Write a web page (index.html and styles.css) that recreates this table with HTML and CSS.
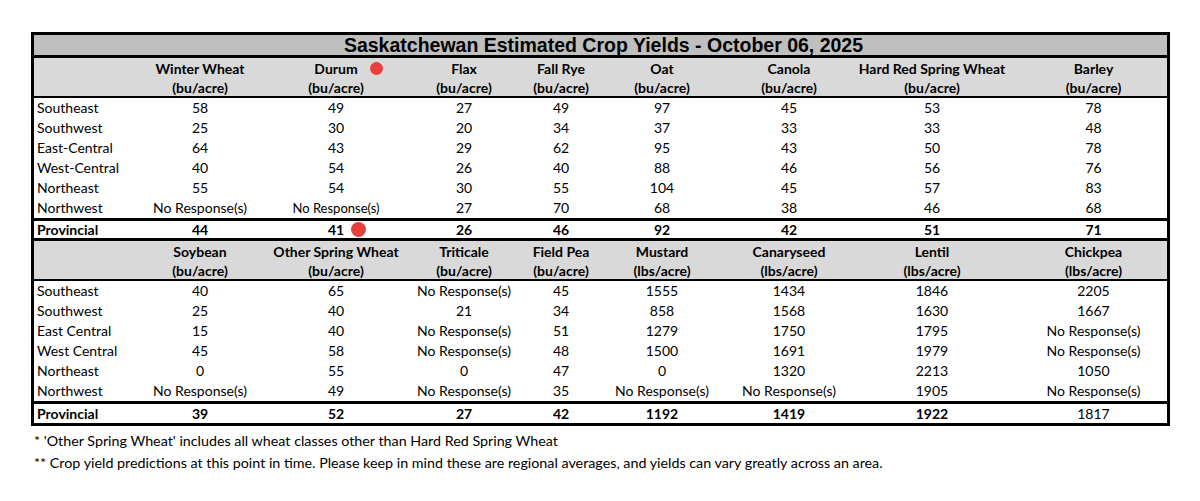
FILE: index.html
```html
<!DOCTYPE html>
<html>
<head>
<meta charset="utf-8">
<link rel="stylesheet" href="styles.css">
</head>
<body>
<div class="page">
  <div class="sheet">
    <div class="title">Saskatchewan Estimated Crop Yields - October 06, 2025</div>

    <div class="row head">
      <div class="cell label"></div>
      <div class="cell"><span>Winter Wheat</span><span>(bu/acre)</span></div>
      <div class="cell"><span class="marked">Durum<span class="dot dot-head"></span></span><span>(bu/acre)</span></div>
      <div class="cell"><span>Flax</span><span>(bu/acre)</span></div>
      <div class="cell"><span>Fall Rye</span><span>(bu/acre)</span></div>
      <div class="cell"><span>Oat</span><span>(bu/acre)</span></div>
      <div class="cell"><span>Canola</span><span>(bu/acre)</span></div>
      <div class="cell"><span>Hard Red Spring Wheat</span><span>(bu/acre)</span></div>
      <div class="cell"><span>Barley</span><span>(bu/acre)</span></div>
    </div>

    <div class="body">
      <div class="row data"><div class="cell label">Southeast</div><div class="cell">58</div><div class="cell">49</div><div class="cell">27</div><div class="cell">49</div><div class="cell">97</div><div class="cell">45</div><div class="cell">53</div><div class="cell">78</div></div>
      <div class="row data"><div class="cell label">Southwest</div><div class="cell">25</div><div class="cell">30</div><div class="cell">20</div><div class="cell">34</div><div class="cell">37</div><div class="cell">33</div><div class="cell">33</div><div class="cell">48</div></div>
      <div class="row data"><div class="cell label">East-Central</div><div class="cell">64</div><div class="cell">43</div><div class="cell">29</div><div class="cell">62</div><div class="cell">95</div><div class="cell">43</div><div class="cell">50</div><div class="cell">78</div></div>
      <div class="row data"><div class="cell label">West-Central</div><div class="cell">40</div><div class="cell">54</div><div class="cell">26</div><div class="cell">40</div><div class="cell">88</div><div class="cell">46</div><div class="cell">56</div><div class="cell">76</div></div>
      <div class="row data"><div class="cell label">Northeast</div><div class="cell">55</div><div class="cell">54</div><div class="cell">30</div><div class="cell">55</div><div class="cell">104</div><div class="cell">45</div><div class="cell">57</div><div class="cell">83</div></div>
      <div class="row data"><div class="cell label">Northwest</div><div class="cell">No Response(s)</div><div class="cell small">No Response(s)</div><div class="cell">27</div><div class="cell">70</div><div class="cell">68</div><div class="cell">38</div><div class="cell">46</div><div class="cell">68</div></div>
    </div>

    <div class="row total">
      <div class="cell label">Provincial</div><div class="cell">44</div><div class="cell"><span class="marked">41<span class="dot dot-total"></span></span></div><div class="cell">26</div><div class="cell">46</div><div class="cell">92</div><div class="cell">42</div><div class="cell">51</div><div class="cell">71</div>
    </div>

    <div class="row head">
      <div class="cell label"></div>
      <div class="cell"><span>Soybean</span><span>(bu/acre)</span></div>
      <div class="cell"><span>Other Spring Wheat</span><span>(bu/acre)</span></div>
      <div class="cell"><span>Triticale</span><span>(bu/acre)</span></div>
      <div class="cell"><span>Field Pea</span><span>(bu/acre)</span></div>
      <div class="cell"><span>Mustard</span><span>(lbs/acre)</span></div>
      <div class="cell"><span>Canaryseed</span><span>(lbs/acre)</span></div>
      <div class="cell"><span>Lentil</span><span>(lbs/acre)</span></div>
      <div class="cell"><span>Chickpea</span><span>(lbs/acre)</span></div>
    </div>

    <div class="body">
      <div class="row data"><div class="cell label">Southeast</div><div class="cell">40</div><div class="cell">65</div><div class="cell">No Response(s)</div><div class="cell">45</div><div class="cell">1555</div><div class="cell">1434</div><div class="cell">1846</div><div class="cell">2205</div></div>
      <div class="row data"><div class="cell label">Southwest</div><div class="cell">25</div><div class="cell">40</div><div class="cell">21</div><div class="cell">34</div><div class="cell">858</div><div class="cell">1568</div><div class="cell">1630</div><div class="cell">1667</div></div>
      <div class="row data"><div class="cell label">East Central</div><div class="cell">15</div><div class="cell">40</div><div class="cell">No Response(s)</div><div class="cell">51</div><div class="cell">1279</div><div class="cell">1750</div><div class="cell">1795</div><div class="cell">No Response(s)</div></div>
      <div class="row data"><div class="cell label">West Central</div><div class="cell">45</div><div class="cell">58</div><div class="cell">No Response(s)</div><div class="cell">48</div><div class="cell">1500</div><div class="cell">1691</div><div class="cell">1979</div><div class="cell">No Response(s)</div></div>
      <div class="row data"><div class="cell label">Northeast</div><div class="cell">0</div><div class="cell">55</div><div class="cell">0</div><div class="cell">47</div><div class="cell">0</div><div class="cell">1320</div><div class="cell">2213</div><div class="cell">1050</div></div>
      <div class="row data"><div class="cell label">Northwest</div><div class="cell">No Response(s)</div><div class="cell">49</div><div class="cell">No Response(s)</div><div class="cell">35</div><div class="cell">No Response(s)</div><div class="cell">No Response(s)</div><div class="cell">1905</div><div class="cell">No Response(s)</div></div>
    </div>

    <div class="row total last">
      <div class="cell label">Provincial</div><div class="cell">39</div><div class="cell">52</div><div class="cell">27</div><div class="cell">42</div><div class="cell">1192</div><div class="cell">1419</div><div class="cell">1922</div><div class="cell regular">1817</div>
    </div>
  </div>

  <div class="notes">
    <p>* 'Other Spring Wheat' includes all wheat classes other than Hard Red Spring Wheat</p>
    <p>** Crop yield predictions at this point in time. Please keep in mind these are regional averages, and yields can vary greatly across an area.</p>
  </div>
</div>
</body>
</html>
```

FILE: styles.css
```css
* {
  box-sizing: border-box;
}

html, body {
  margin: 0;
  padding: 0;
  background: #ffffff;
}

body {
  font-family: Lato, "Open Sans", sans-serif;
  font-size: 14px;
  color: #000000;
}

.page {
  padding: 32px 0 0 31px;
  width: 1170px;
}

.sheet {
  border: 3px solid #000000;
  width: 1139px;
}

.title {
  height: 23px;
  background: #bfbfbf;
  border-bottom: 3px solid #000000;
  font-family: "Liberation Sans", Arial, sans-serif;
  font-weight: bold;
  font-size: 19.5px;
  line-height: 21px;
  text-align: center;
  padding-left: 6px;
}

.row {
  display: grid;
  grid-template-columns: 90px 152px 120px 136px 58px 144px 110px 176px 1fr;
}

.cell {
  display: flex;
  justify-content: center;
  align-items: center;
  white-space: nowrap;
}

.cell.label {
  justify-content: flex-start;
  padding-left: 3px;
}

.head {
  height: 40px;
  background: #d9d9d9;
  border-bottom: 2px solid #000000;
  font-weight: bold;
}

.head .cell {
  flex-direction: column;
  justify-content: flex-start;
  padding-top: 1px;
  line-height: 19px;
}

.body {
  display: flex;
  flex-direction: column;
}

.data {
  height: 20px;
  line-height: 20px;
}

.small {
  font-size: 13px;
}

.total {
  height: 23px;
  line-height: 17px;
  border-top: 3px solid #000000;
  border-bottom: 3px solid #000000;
  font-weight: bold;
  background: #ffffff;
}

.total.last {
  height: 22px;
  border-bottom: 0;
  line-height: 19px;
}

.regular {
  font-weight: normal;
}

.marked {
  position: relative;
}

.dot {
  position: absolute;
  border-radius: 50%;
  background: #e8403a;
}

.dot-head {
  width: 13px;
  height: 13px;
  left: calc(100% + 12px);
  top: 3px;
}

.dot-total {
  width: 15px;
  height: 15px;
  left: calc(100% + 7px);
  top: 1px;
}

.notes {
  padding: 4px 0 0 3px;
}

.notes p {
  margin: 0;
  line-height: 22px;
  font-size: 14.3px;
}
```
